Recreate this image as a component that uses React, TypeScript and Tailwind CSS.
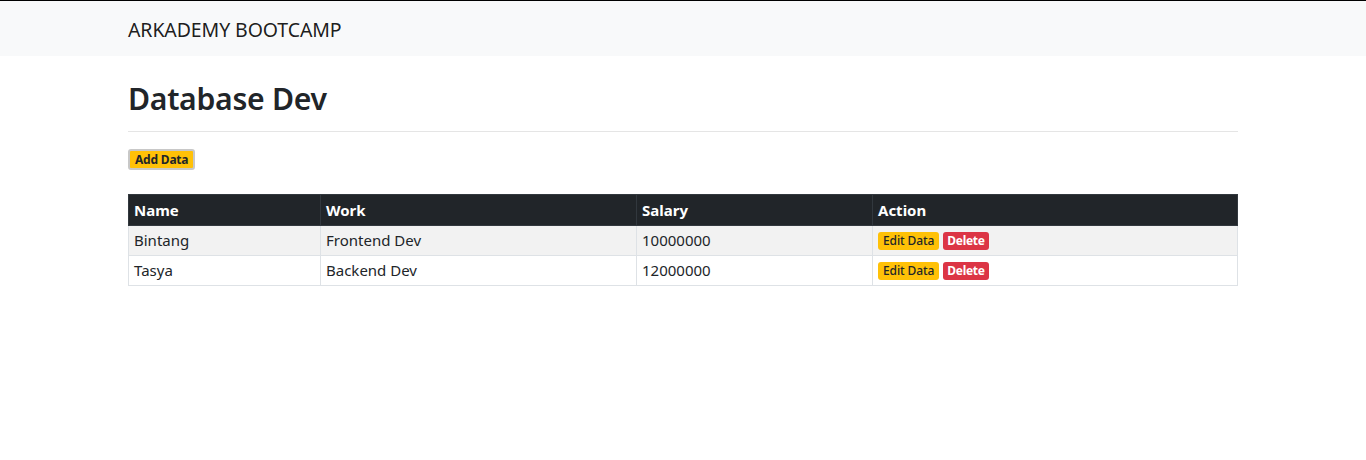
import React from "react";

const rows = [
  { name: "Bintang", work: "Frontend Dev", salary: "10000000" },
  { name: "Tasya", work: "Backend Dev", salary: "12000000" },
];

export default function App() {
  return (
    <div className="min-h-[460px] bg-white text-[#212529]" style={{ fontFamily: '"Noto Sans", "Open Sans", sans-serif' }}>
      <div className="border-t border-black bg-[#f8f9fa]">
        <div className="mx-auto w-[1110px] h-[55px] flex items-center pt-[3px]">
          <span className="text-[19.5px] text-black/90 tracking-[-0.1px]">ARKADEMY BOOTCAMP</span>
        </div>
      </div>
      <div className="mx-auto w-[1110px]">
        <h1 className="mt-[24px] text-[30.2px] font-semibold leading-[38px] tracking-[-0.3px] text-[#212529]">Database Dev</h1>
        <hr className="mt-[13px] border-t border-black/10" />
        <button className="mt-[17px] h-[21px] px-[5px] bg-[#ffc107] border-2 border-[#c8c8c8] rounded-[3px] text-[12px] font-bold leading-none text-[#212529] flex items-center tracking-[-0.2px]">
          Add Data
        </button>
        <table className="mt-[24px] w-full border-collapse text-[15px]">
          <thead>
            <tr className="bg-[#212529] text-white h-[31px]">
              <th className="w-[192px] text-left font-bold px-[5px] border border-[#32383e]">Name</th>
              <th className="w-[316px] text-left font-bold px-[5px] border border-[#32383e]">Work</th>
              <th className="w-[236px] text-left font-bold px-[5px] border border-[#32383e]">Salary</th>
              <th className="text-left font-bold px-[5px] border border-[#32383e]">Action</th>
            </tr>
          </thead>
          <tbody>
            {rows.map((r, i) => (
              <tr key={r.name} className={(i % 2 === 0 ? "bg-[#f2f2f2]" : "bg-white") + " h-[30px]"}>
                <td className="px-[5px] border border-[#dee2e6]">{r.name}</td>
                <td className="px-[5px] border border-[#dee2e6]">{r.work}</td>
                <td className="px-[5px] border border-[#dee2e6]">{r.salary}</td>
                <td className="px-[5px] border border-[#dee2e6]">
                  <div className="flex items-center gap-[4px] pt-[1px]">
                    <span className="inline-flex items-center h-[18px] px-[5px] rounded-[3px] bg-[#ffc107] text-[12px] font-medium text-[#212529] tracking-[-0.1px]">Edit Data</span>
                    <span className="inline-flex items-center h-[18px] px-[4px] rounded-[3px] bg-[#dc3545] text-[12px] font-bold text-white tracking-[-0.3px]">Delete</span>
                  </div>
                </td>
              </tr>
            ))}
          </tbody>
        </table>
      </div>
    </div>
  );
}
